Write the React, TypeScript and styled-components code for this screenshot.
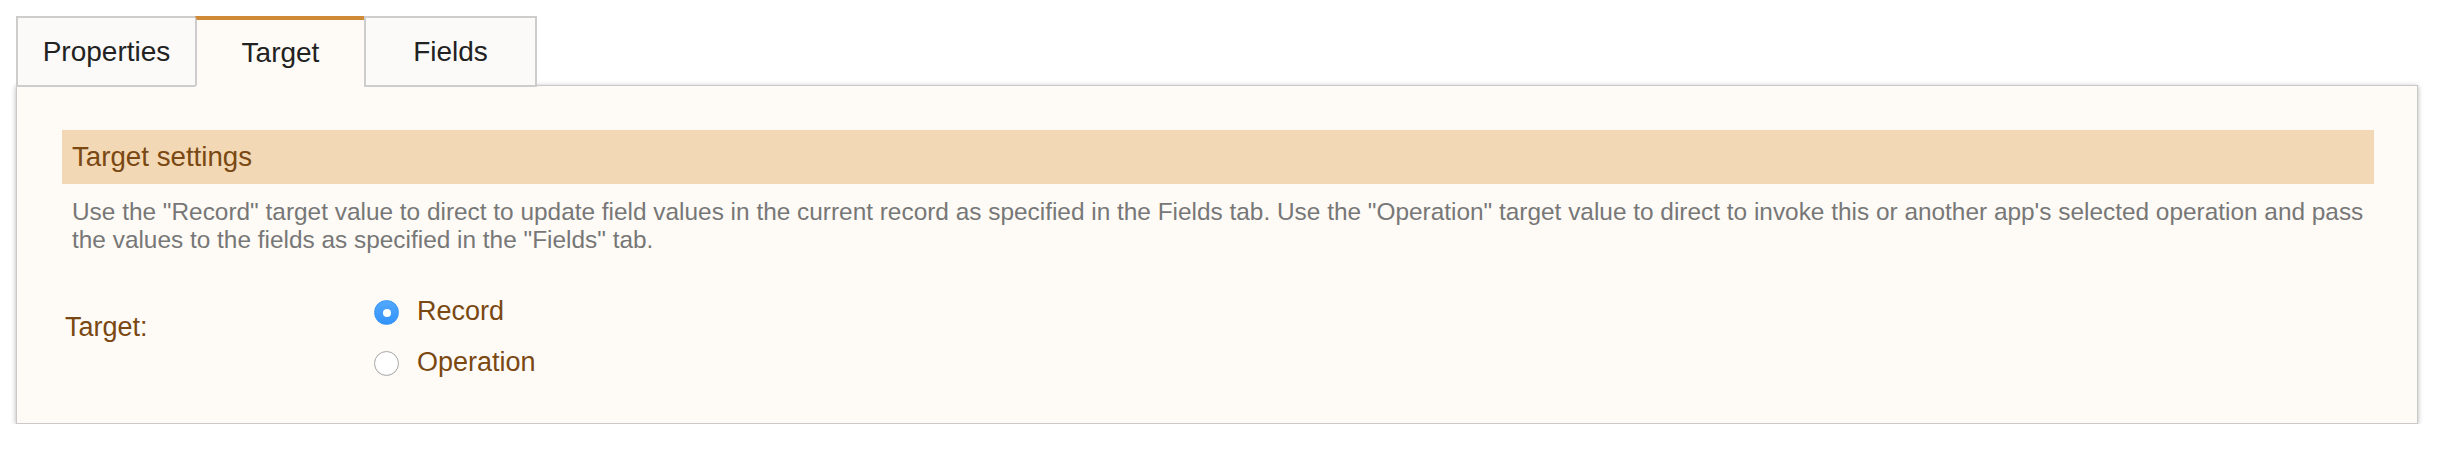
import React from "react";
import styled, { createGlobalStyle } from "styled-components";

const Global = createGlobalStyle`
  html, body { margin: 0; padding: 0; background: #ffffff; }
  body { font-family: "Liberation Sans", Arial, Helvetica, sans-serif; }
`;

const Page = styled.div`
  padding: 16px 28px 0 16px;
`;

const TabBar = styled.div`
  display: flex;
  position: relative;
  z-index: 1;
  margin-bottom: -2px;
`;

const Tab = styled.div<{ $active?: boolean; $w: number }>`
  box-sizing: border-box;
  width: ${(p) => p.$w}px;
  height: 71px;
  margin-left: -2px;
  &:first-child { margin-left: 0; }
  display: flex;
  align-items: center;
  justify-content: center;
  font-size: 28px;
  color: #222222;
  background: ${(p) => (p.$active ? "#fefbf6" : "#fbfaf8")};
  border: 2px solid #cdcdcd;
  border-top: ${(p) => (p.$active ? "4px solid #cf8a36" : "2px solid #cdcdcd")};
  border-bottom: ${(p) => (p.$active ? "2px solid #fefbf6" : "2px solid #cdcdcd")};
`;

const Panel = styled.div`
  box-sizing: border-box;
  background: #fefbf6;
  border: 1px solid #c9c9c9;
  box-shadow: 0 1px 5px rgba(0, 0, 0, 0.3);
  padding: 44px 43px 35px 45px;
`;

const SectionHeader = styled.div`
  height: 54px;
  background: #f2d8b5;
  color: #7a4812;
  font-size: 27.7px;
  display: flex;
  align-items: center;
  padding-left: 10px;
`;

const Description = styled.p`
  margin: 14px 0 0 0;
  padding-left: 10px;
  font-size: 24.4px;
  line-height: 28px;
  color: #777777;
`;

const FormRow = styled.div`
  display: grid;
  grid-template-columns: 312px 1fr;
  margin-top: 32px;
`;

const Label = styled.div`
  padding-left: 3px;
  padding-top: 16px;
  font-size: 27px;
  line-height: 51px;
  color: #7a4812;
`;

const Options = styled.div`
  display: flex;
  flex-direction: column;
`;

const Option = styled.label`
  display: flex;
  align-items: center;
  gap: 18px;
  height: 51px;
  font-size: 27px;
  color: #7a4812;
`;

const Radio = styled.span<{ $checked?: boolean }>`
  box-sizing: border-box;
  width: 25px;
  height: 25px;
  border-radius: 50%;
  display: flex;
  align-items: center;
  justify-content: center;
  margin-top: 2px;
  background: ${(p) =>
    p.$checked ? "linear-gradient(#52a8fd, #3393fb)" : "#ffffff"};
  border: ${(p) => (p.$checked ? "1px solid #3a95f5" : "1px solid #a8a8a8")};
  box-shadow: ${(p) => (p.$checked ? "none" : "inset 0 -1px 2px rgba(0,0,0,0.06)")};
`;

const Dot = styled.span`
  width: 8px;
  height: 8px;
  border-radius: 50%;
  background: #ffffff;
`;

const options = [
  { label: "Record", checked: true },
  { label: "Operation", checked: false },
];

export default function App() {
  return (
    <>
      <Global />
      <Page>
        <TabBar>
          <Tab $w={181}>Properties</Tab>
          <Tab $w={171} $active>Target</Tab>
          <Tab $w={173}>Fields</Tab>
        </TabBar>
        <Panel>
          <SectionHeader>Target settings</SectionHeader>
          <Description>
            Use the "Record" target value to direct to update field values in the current record as
            specified in the Fields tab. Use the "Operation" target value to direct to invoke this or
            another app's selected operation and pass the values to the fields as specified in the
            "Fields" tab.
          </Description>
          <FormRow>
            <Label>Target:</Label>
            <Options>
              {options.map((o) => (
                <Option key={o.label}>
                  <Radio $checked={o.checked}>{o.checked && <Dot />}</Radio>
                  {o.label}
                </Option>
              ))}
            </Options>
          </FormRow>
        </Panel>
      </Page>
    </>
  );
}
